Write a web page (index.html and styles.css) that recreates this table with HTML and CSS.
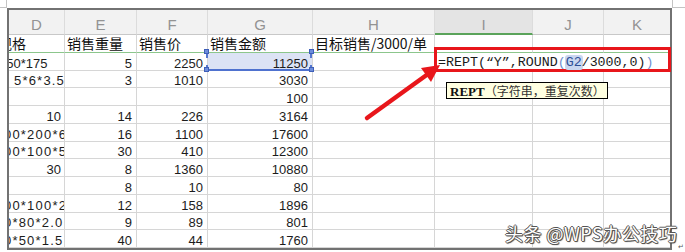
FILE: index.html
```html
<!DOCTYPE html>
<html lang="zh-CN">
<head>
<meta charset="utf-8">
<title>REPT</title>
<link rel="stylesheet" href="styles.css">
</head>
<body>
<div class="corner-tl"></div>
<div class="corner-tr"></div>

<div class="sheet">
  <div class="c h">D</div><div class="c h">E</div><div class="c h">F</div><div class="c h">G</div><div class="c h">H</div><div class="c h active">I</div><div class="c h">J</div><div class="c h k">K</div>

  <div class="c t d"><span class="m11">规格</span></div><div class="c t v">销售重量</div><div class="c t v">销售价</div><div class="c t v">销售金额</div><div class="c t v">目标销售/3000/单</div><div class="c t"></div><div class="c t"></div><div class="c t k"></div>

  <div class="c d"><span class="m10">150*175</span></div><div class="c n">5</div><div class="c n">2250</div><div class="c n sel"><div class="refbox"><i class="hd tl"></i><i class="hd tr"></i><i class="hd bl"></i><i class="hd br"></i></div>11250</div><div class="c"></div><div class="c open"></div><div class="c open"></div><div class="c k"></div>

  <div class="c d"><span class="wide p5">5*6*3.5</span></div><div class="c n">3</div><div class="c n">1010</div><div class="c n">3030</div><div class="c"></div><div class="c"></div><div class="c"></div><div class="c k"></div>

  <div class="c d"></div><div class="c n"></div><div class="c n"></div><div class="c n">100</div><div class="c"></div><div class="c"></div><div class="c"></div><div class="c k"></div>

  <div class="c d n">10</div><div class="c n">14</div><div class="c n">226</div><div class="c n">3164</div><div class="c"></div><div class="c"></div><div class="c"></div><div class="c k"></div>

  <div class="c d"><span class="wide m5">00*200*6</span></div><div class="c n">16</div><div class="c n">1100</div><div class="c n">17600</div><div class="c"></div><div class="c"></div><div class="c"></div><div class="c k"></div>

  <div class="c d"><span class="wide m5">00*100*5</span></div><div class="c n">30</div><div class="c n">410</div><div class="c n">12300</div><div class="c"></div><div class="c"></div><div class="c"></div><div class="c k"></div>

  <div class="c d n">30</div><div class="c n">8</div><div class="c n">1360</div><div class="c n">10880</div><div class="c"></div><div class="c"></div><div class="c"></div><div class="c k"></div>

  <div class="c d"></div><div class="c n">8</div><div class="c n">10</div><div class="c n">80</div><div class="c"></div><div class="c"></div><div class="c"></div><div class="c k"></div>

  <div class="c d"><span class="wide m5">00*100*2</span></div><div class="c n">12</div><div class="c n">158</div><div class="c n">1896</div><div class="c"></div><div class="c"></div><div class="c"></div><div class="c k"></div>

  <div class="c d"><span class="wide m5">0*80*2.0</span></div><div class="c n">9</div><div class="c n">89</div><div class="c n">801</div><div class="c"></div><div class="c"></div><div class="c"></div><div class="c k"></div>

  <div class="c d"><span class="wide m5">0*50*1.5</span></div><div class="c n">40</div><div class="c n">44</div><div class="c n">1760</div><div class="c"></div><div class="c"></div><div class="c"></div><div class="c k"></div>
</div>

<div class="edit">=REPT(“Y”,ROUND<span class="par">(</span><span class="ref">G2</span>/3000,0)<span class="par">)</span></div>

<div class="tip"><b>REPT</b><span class="args">（字符串，重复次数）</span></div>

<svg class="arrow" width="90" height="66" viewBox="0 0 90 66" xmlns="http://www.w3.org/2000/svg">
  <line x1="7" y1="60" x2="68" y2="16" stroke="#e8161b" stroke-width="4.5" stroke-linecap="round"/>
  <polygon points="80,7 71,24 61,10" fill="#e8161b"/>
</svg>

<div class="mark">头条 @WPS办公技巧</div>
<div class="pmark">↵</div>
</body>
</html>
```

FILE: styles.css
```css
* { box-sizing: border-box; }

body {
  margin: 0;
  width: 685px;
  height: 252px;
  overflow: hidden;
  position: relative;
  background: #ffffff;
  font-family: "Liberation Sans", Arial, sans-serif;
}

.corner-tl {
  position: absolute;
  left: 0;
  top: 0;
  width: 7px;
  height: 8px;
  border-right: 1px solid #c4c4c4;
  border-bottom: 1px solid #c4c4c4;
}

.corner-tr {
  position: absolute;
  left: 672px;
  top: 0;
  width: 13px;
  height: 8px;
  border-left: 1px solid #c4c4c4;
  border-bottom: 1px solid #c4c4c4;
}

.sheet {
  margin: 8px 0 0 7px;
  width: 665px;
  border: 2px solid #727272;
  display: grid;
  grid-template-columns: 56px 72px 71px 105px 122px 98px 71px 66px;
  grid-template-rows: 25px repeat(12, 17.75px);
}

.c {
  border-right: 1px solid #d6d6d6;
  border-bottom: 1px solid #d6d6d6;
  display: flex;
  align-items: flex-end;
  padding: 0 4px 0 3px;
  font-size: 13px;
  line-height: 13px;
  color: #1c1c1c;
  white-space: nowrap;
  overflow: hidden;
}

.c.k { border-right: none; }
.c.open { border-right-color: transparent; }
.c.v { overflow: visible; }

.n { justify-content: flex-end; }

.h {
  background: #f2f2f2;
  border-right-color: #dcdcdc;
  border-bottom-color: #c8c8c8;
  justify-content: center;
  align-items: center;
  padding: 5px 0 0 0;
  font-size: 15px;
  line-height: 15px;
  color: #939393;
}

.h.active {
  background: #e4e4e4;
  border-bottom: 2px solid #5aa35a;
}

.t {
  font-family: "Noto Sans CJK SC", "Liberation Sans", sans-serif;
  font-size: 14px;
  line-height: 14px;
  padding-bottom: 2px;
  padding-left: 2px;
  color: #111111;
  border-bottom-color: #8cc68c;
}

.d { padding-left: 0; padding-right: 3px; }

.m11 { margin-left: -11px; }
.m10 { margin-left: -10px; }
.m5 { margin-left: -5px; }
.p5 { margin-left: 5px; }
.wide { letter-spacing: 1.2px; }

.sel {
  background: #dce3f5;
  position: relative;
  overflow: visible;
}

.refbox {
  position: absolute;
  left: -2px;
  right: 0;
  top: -1px;
  bottom: -1px;
  border-left: 2px dashed #5577d0;
  border-right: 2px dashed #5577d0;
  border-bottom: 2px solid #4f72cf;
}

.hd {
  position: absolute;
  width: 5px;
  height: 5px;
  background: #6d8ddb;
  border: 1px solid #3e5fb8;
}
.hd.tl { left: -4px; top: -3px; }
.hd.tr { right: -4px; top: -3px; }
.hd.bl { left: -4px; bottom: -3px; }
.hd.br { right: -4px; bottom: -3px; }

.edit {
  position: absolute;
  left: 434px;
  top: 47px;
  width: 237px;
  height: 25px;
  border: 3px solid #e8161b;
  padding: 6px 0 0 1px;
  font-family: "Liberation Mono", "DejaVu Sans Mono", monospace;
  font-size: 13.3px;
  line-height: 13px;
  color: #1a1a1a;
  white-space: nowrap;
}

.edit .ref {
  background: #c9d6ef;
  color: #2d4f96;
  border-radius: 3px;
  padding: 0 1px;
  margin: 0 -1px;
}

.edit .par { color: #6f8fd0; }

.tip {
  position: absolute;
  left: 446px;
  top: 82px;
  height: 17px;
  border: 1px solid #000000;
  background: #ffffe1;
  padding: 0 2px 0 3px;
  line-height: 15px;
  white-space: nowrap;
}

.tip b {
  font-family: "Liberation Serif", "Times New Roman", serif;
  font-weight: bold;
  font-size: 13px;
  color: #111111;
}

.tip .args {
  font-family: "Noto Sans CJK SC", sans-serif;
  font-size: 12px;
  color: #333333;
}

.arrow {
  position: absolute;
  left: 360px;
  top: 58px;
}

.mark {
  position: absolute;
  left: 505px;
  top: 224px;
  font-family: "Noto Sans CJK SC", "Liberation Sans", sans-serif;
  font-size: 18px;
  line-height: 18px;
  letter-spacing: 0.5px;
  color: #ffffff;
  white-space: nowrap;
  text-shadow: 1px 0 0 #555, -1px 0 0 #555, 0 1px 0 #555, 0 -1px 0 #555, 1px 1px 1px #333;
}

.pmark {
  position: absolute;
  left: 678px;
  top: 243px;
  font-family: "DejaVu Sans", sans-serif;
  font-size: 7px;
  line-height: 8px;
  color: #555555;
}
```
